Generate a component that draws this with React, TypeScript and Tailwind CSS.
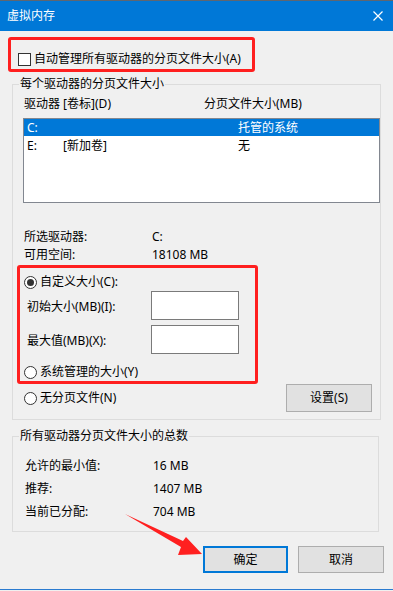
import React from "react";

const Radio = ({ checked }: { checked?: boolean }) => (
    <svg width="13" height="13" viewBox="0 0 13 13" className="shrink-0">
        <circle cx="6.5" cy="6.5" r="6" fill="#fff" stroke="#333" strokeWidth="1" />
        {checked && <circle cx="6.5" cy="6.5" r="3.5" fill="#333" />}
    </svg>
);

const TextBox = () => (
    <div className="h-[29px] w-[88px] border border-[#7a7a7a] bg-white" />
);

const Row = ({ label, value }: { label: string; value: string }) => (
    <div className="flex">
        <span className="w-[128px]">{label}</span>
        <span>{value}</span>
    </div>
);

const App = () => {
    return (
        <div className="relative flex h-[591px] w-[393px] flex-col overflow-hidden bg-[#f0f0f0] font-['Noto_Sans','Noto_Sans_CJK_SC',sans-serif] text-[12px] leading-[16px] text-black">
            <div className="h-px bg-[#5f6670]" />
            {/* title bar */}
            <div className="flex h-[30px] items-center justify-between bg-[#0078d7] pl-[7px] pr-[10px] text-white">
                <span>虚拟内存</span>
                <svg width="10" height="10" viewBox="0 0 10 10">
                    <path d="M0.5 0.5L9.5 9.5M9.5 0.5L0.5 9.5" stroke="#fff" strokeWidth="1.2" />
                </svg>
            </div>

            {/* highlighted checkbox */}
            <div className="ml-[8px] mt-[6px] h-[35px] w-[247px] rounded-[3px] border-[3px] border-[#ff1f1f] pl-[7px] pt-[11px]">
                <label className="flex items-center gap-[3px]">
                    <span className="h-[13px] w-[13px] shrink-0 border border-[#333] bg-white" />
                    <span>自动管理所有驱动器的分页文件大小(A)</span>
                </label>
            </div>

            {/* per-drive group */}
            <fieldset className="ml-[12px] mt-[4px] w-[368px] border border-[#dcdcdc] pb-[7px]">
                <legend className="ml-[6px] px-px leading-[16px]">每个驱动器的分页文件大小</legend>
                <div className="ml-[11px] mt-[4px] flex">
                    <span className="w-[180px]">驱动器 [卷标](D)</span>
                    <span>分页文件大小(MB)</span>
                </div>
                <div className="ml-[10px] mt-[6px] h-[85px] w-[357px] border border-[#828790] bg-white">
                    <div className="flex h-[17px] items-center bg-[#0078d7] pl-[3px] text-white">
                        <span className="w-[211px]">C:</span>
                        <span>托管的系统</span>
                    </div>
                    <div className="flex h-[20px] items-center pl-[3px]">
                        <span className="w-[36px]">E:</span>
                        <span className="w-[175px]">[新加卷]</span>
                        <span>无</span>
                    </div>
                </div>
                <div className="ml-[11px] mt-[25px] leading-[18px]">
                    <Row label="所选驱动器:" value="C:" />
                    <Row label="可用空间:" value="18108 MB" />
                </div>

                {/* highlighted custom size */}
                <div className="ml-[4px] mt-[1px] h-[119px] w-[241px] rounded-[3px] border-[3px] border-[#ff1f1f]">
                    <label className="mt-[6px] flex items-center gap-[3px] pl-[4px]">
                        <Radio checked />
                        <span>自定义大小(C):</span>
                    </label>
                    <div className="mt-[1px] flex items-center pl-[7px]">
                        <span className="w-[124px] pt-[2px]">初始大小(MB)(I):</span>
                        <TextBox />
                    </div>
                    <div className="mt-[5px] flex items-center pl-[7px]">
                        <span className="w-[124px] pt-[3px]">最大值(MB)(X):</span>
                        <TextBox />
                    </div>
                    <label className="mt-[10px] flex items-center gap-[3px] pl-[4px]">
                        <Radio />
                        <span>系统管理的大小(Y)</span>
                    </label>
                </div>

                <div className="flex h-[28px] items-center pl-[11px] pr-[8px]">
                    <label className="flex items-center gap-[3px]">
                        <Radio />
                        <span>无分页文件(N)</span>
                    </label>
                    <button className="ml-auto h-[28px] w-[86px] border border-[#adadad] bg-[#e1e1e1]">设置(S)</button>
                </div>
            </fieldset>

            {/* totals group */}
            <fieldset className="ml-[12px] mt-[8px] w-[367px] border border-[#dcdcdc] pb-[8px]">
                <legend className="ml-[6px] px-px leading-[16px]">所有驱动器分页文件大小的总数</legend>
                <div className="ml-[12px] mt-[10px] leading-[23px]">
                    <Row label="允许的最小值:" value="16 MB" />
                    <Row label="推荐:" value="1407 MB" />
                    <Row label="当前已分配:" value="704 MB" />
                </div>
            </fieldset>

            <div className="mt-[14px] flex justify-end gap-[10px] pr-[9px]">
                <button className="h-[27px] w-[85px] border-2 border-[#0078d7] bg-[#e1e1e1]">确定</button>
                <button className="h-[27px] w-[86px] border border-[#adadad] bg-[#e1e1e1]">取消</button>
            </div>

            <div className="mt-auto mb-px h-px bg-[#2a7bd0]" />

            {/* annotation arrow */}
            <svg className="pointer-events-none absolute left-0 top-0" width="393" height="591" viewBox="0 0 393 591">
                <polygon points="125,514 183,541 186,537 202,554 178,555 181,547" fill="#ff2020" />
            </svg>
        </div>
    );
};

export default App;
